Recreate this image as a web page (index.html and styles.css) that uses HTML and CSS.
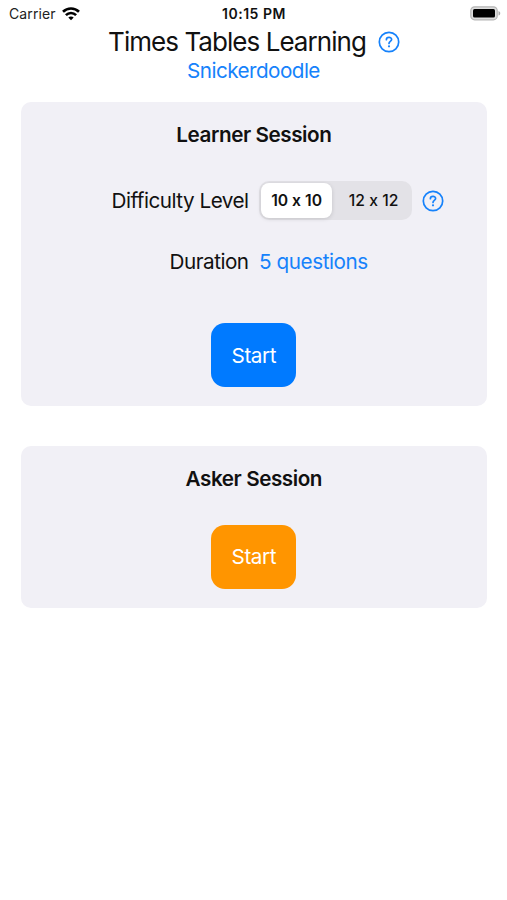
FILE: index.html
```html
<!DOCTYPE html>
<html lang="en">
<head>
<meta charset="utf-8">
<title>Times Tables Learning</title>
<link rel="stylesheet" href="styles.css">
</head>
<body>
<div class="status">
  <div class="carrier"><span>Carrier</span>
    <svg class="wifi" width="18" height="14" viewBox="0 0 18 14" fill="none" stroke="#000" stroke-width="2.6"><path d="M1 4.800C5.500.4 12.500.4 17 4.800M3.900 8.200C6.800 5.300 11.200 5.300 14.100 8.200"/><path d="M9 13.300 6.300 10.600C7.800 9.200 10.200 9.200 11.700 10.600Z" fill="#000" stroke="none"/></svg>
  </div>
  <span class="time">10:15 PM</span>
  <svg class="battery" width="31" height="15" viewBox="0 0 31 15"><rect x=".8" y=".8" width="26.400" height="13" rx="3.800" fill="#ddd" stroke="#b5b5b5" stroke-width="1.200"/><rect x="3" y="3" width="22" height="8.600" rx="1.500"/><path d="M28.500 5v4.600C30.800 8.700 30.800 5.900 28.500 5Z" fill="#aaa"/></svg>
</div>
<header class="header">
  <div class="title-row">
    <h1 class="title">Times Tables Learning</h1>
    <svg class="help" width="22" height="22" viewBox="0 0 22 22" fill="none" stroke="#1682fb" stroke-width="1.700"><circle cx="11" cy="11" r="9.700"/><path d="M8.400 8.700C8.400 5.700 13.600 5.700 13.600 8.500 13.600 10.500 11 10.400 11 12.500" stroke-linecap="round"/><circle cx="11" cy="15.300" r="1.100" fill="#1682fb" stroke="none"/></svg>
  </div>
  <div class="name">Snickerdoodle</div>
</header>
<main>
  <section class="card learner">
    <h2 class="heading">Learner Session</h2>
    <div class="row level">
      <span class="label difficulty">Difficulty Level</span>
      <div class="value">
        <div class="segmented"><span class="segment selected">10 x 10</span><span class="segment">12 x 12</span></div>
        <svg class="help" width="22" height="22" viewBox="0 0 22 22" fill="none" stroke="#1682fb" stroke-width="1.700"><circle cx="11" cy="11" r="9.700"/><path d="M8.400 8.700C8.400 5.700 13.600 5.700 13.600 8.500 13.600 10.500 11 10.400 11 12.500" stroke-linecap="round"/><circle cx="11" cy="15.300" r="1.100" fill="#1682fb" stroke="none"/></svg>
      </div>
    </div>
    <div class="row duration">
      <span class="label">Duration</span>
      <span class="value questions">5 questions</span>
    </div>
    <button class="start">Start</button>
  </section>
  <section class="card asker">
    <h2 class="heading asker-heading">Asker Session</h2>
    <button class="start orange">Start</button>
  </section>
</main>
</body>
</html>
```
FILE: styles.css
```css
* { box-sizing: border-box; }
body { margin: 0; height: 900px; background: #fff; color: #111; font-family: Inter, "Liberation Sans", sans-serif; font-size: 20.7px; overflow: hidden; }
svg { display: block; flex: none; }
h1, h2 { margin: 0; }
.status { display: grid; grid-template-columns: 1fr auto 1fr; align-items: center; height: 27px; padding: 0 6px 0 9px; }
.carrier { display: flex; align-items: center; gap: 6px; font-size: 14px; letter-spacing: .1px; color: #222; }
.time { font-size: 14px; font-weight: 600; letter-spacing: .5px; position: relative; left: -1px; }
.battery { justify-self: end; }
.header { height: 75px; }
.title-row { display: flex; justify-content: center; align-items: center; gap: 12px; height: 29px; padding-left: 1px; }
.title { font-size: 26px; font-weight: 400; line-height: 29px; letter-spacing: -.95px; white-space: nowrap; }
.name { text-align: center; color: #1682fb; line-height: 30px; letter-spacing: -.55px; }
.card { width: 466.5px; margin-left: 20.6px; border-radius: 10px; background: #f1f0f6; display: flex; flex-direction: column; align-items: center; }
.learner { height: 304px; padding-top: 19px; }
.asker { height: 162px; margin-top: 39.500px; padding-top: 19px; }
.heading { font-size: 20.7px; line-height: 28px; font-weight: 600; letter-spacing: -.45px; }
.row { width: 100%; display: grid; grid-template-columns: 228px 1fr; column-gap: 10.500px; align-items: center; }
.label { text-align: right; white-space: nowrap; letter-spacing: -.5px; }
.level { height: 39px; margin-top: 32px; }
.value { display: flex; align-items: center; }
.segmented { display: flex; width: 153px; height: 39px; padding: 2px; border-radius: 10px; background: #e3e2e7; margin-right: 10px; }
.segment { width: 73px; display: flex; align-items: center; justify-content: center; font-size: 15.700px; font-weight: 500; white-space: nowrap; font-feature-settings: "calt" 0; }
.selected { border-radius: 8px; background: #fff; box-shadow: 0 1px 4px #0002; font-weight: 600; width: 71px; margin-right: 5px; }
.duration { height: 28px; margin-top: 27.5px; }
.questions { color: #1682fb; letter-spacing: -.45px; }
.start { width: 85px; height: 64px; margin-top: 47.500px; border: 0; border-radius: 14px; background: #007aff; color: #fff; font: 400 20.700px Inter, sans-serif; letter-spacing: -.4px; padding: 0; }
.orange { background: #ff9500; margin-top: 32px; }
```
